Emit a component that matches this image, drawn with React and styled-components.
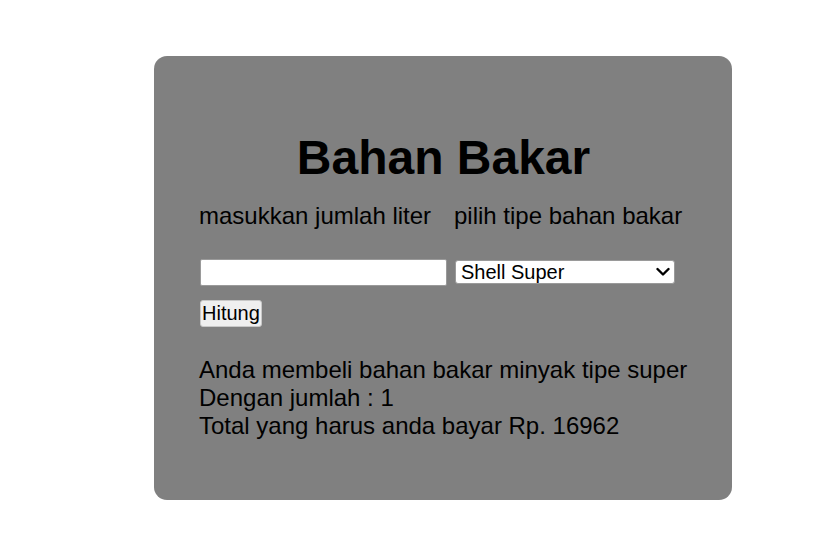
import React from "react";
import styled, { createGlobalStyle } from "styled-components";

const GlobalStyle = createGlobalStyle`
  html, body { margin: 0; padding: 0; background: #ffffff; }
  body { font-family: "Liberation Sans", Arial, sans-serif; color: #000; }
`;

const Page = styled.div`
  width: 834px;
  height: 544px;
  padding: 56px 0 0 154px;
  box-sizing: border-box;
`;

const Card = styled.div`
  width: 578px;
  height: 444px;
  box-sizing: border-box;
  background: #808080;
  border-radius: 13px;
  padding: 74px 44px 0 45px;
  display: flex;
  flex-direction: column;
`;

const Title = styled.h1`
  margin: 0;
  font-size: 48px;
  line-height: 55px;
  font-weight: 700;
  text-align: center;
`;

const FormGrid = styled.div`
  margin-top: 17px;
  display: grid;
  grid-template-columns: 249px 221px;
  column-gap: 6px;
  row-gap: 29px;
  align-items: start;
`;

const Label = styled.span`
  font-size: 24px;
  line-height: 28px;
  white-space: nowrap;
`;

const TextInput = styled.input`
  box-sizing: border-box;
  width: 247px;
  height: 27px;
  margin-left: 1px;
  border: 1px solid #9a9a9a;
  border-radius: 2px;
  background: #fff;
  font-family: "Liberation Sans", Arial, sans-serif;
  font-size: 20px;
  padding: 0 3px;
  outline: none;
`;

const SelectWrap = styled.div`
  position: relative;
  width: 220px;
  height: 24px;
  margin: 1px 0 0 1px;
  justify-self: start;
`;

const Select = styled.select`
  appearance: none;
  -webkit-appearance: none;
  box-sizing: border-box;
  width: 100%;
  height: 24px;
  border: 1px solid #9a9a9a;
  border-radius: 3px;
  background: #fff;
  color: #000;
  font-family: "Liberation Sans", Arial, sans-serif;
  font-size: 20px;
  line-height: 22px;
  padding: 0 24px 0 5px;
  outline: none;
`;

const Chevron = styled.svg`
  position: absolute;
  right: 5px;
  top: 7px;
  width: 14px;
  height: 10px;
  pointer-events: none;
`;

const Button = styled.button`
  box-sizing: border-box;
  align-self: flex-start;
  margin: 14px 0 0 1px;
  height: 27px;
  padding: 0 1px;
  border: 1px solid #c8c8c8;
  border-radius: 3px;
  background: #efefef;
  color: #000;
  font-family: "Liberation Sans", Arial, sans-serif;
  font-size: 20px;
  line-height: 23px;
`;

const Result = styled.div`
  margin-top: 29px;
  font-size: 24px;
  line-height: 28px;
`;

export default function App() {
  return (
    <>
      <GlobalStyle />
      <Page>
        <Card>
          <Title>Bahan Bakar</Title>
          <FormGrid>
            <Label>masukkan jumlah liter</Label>
            <Label>pilih tipe bahan bakar</Label>
            <TextInput type="text" defaultValue="" />
            <SelectWrap>
              <Select defaultValue="super">
                <option value="super">Shell Super</option>
                <option value="vpower">Shell V-Power</option>
                <option value="diesel">Shell V-Power Diesel</option>
                <option value="nitro">Shell V-Power Nitro</option>
              </Select>
              <Chevron viewBox="0 0 14 10" aria-hidden="true">
                <path
                  d="M1.5 2 L7 7.5 L12.5 2"
                  fill="none"
                  stroke="#000"
                  strokeWidth="2.4"
                  strokeLinecap="round"
                  strokeLinejoin="round"
                />
              </Chevron>
            </SelectWrap>
          </FormGrid>
          <Button type="button">Hitung</Button>
          <Result>
            <div>Anda membeli bahan bakar minyak tipe super</div>
            <div>Dengan jumlah : 1</div>
            <div>Total yang harus anda bayar Rp. 16962</div>
          </Result>
        </Card>
      </Page>
    </>
  );
}
